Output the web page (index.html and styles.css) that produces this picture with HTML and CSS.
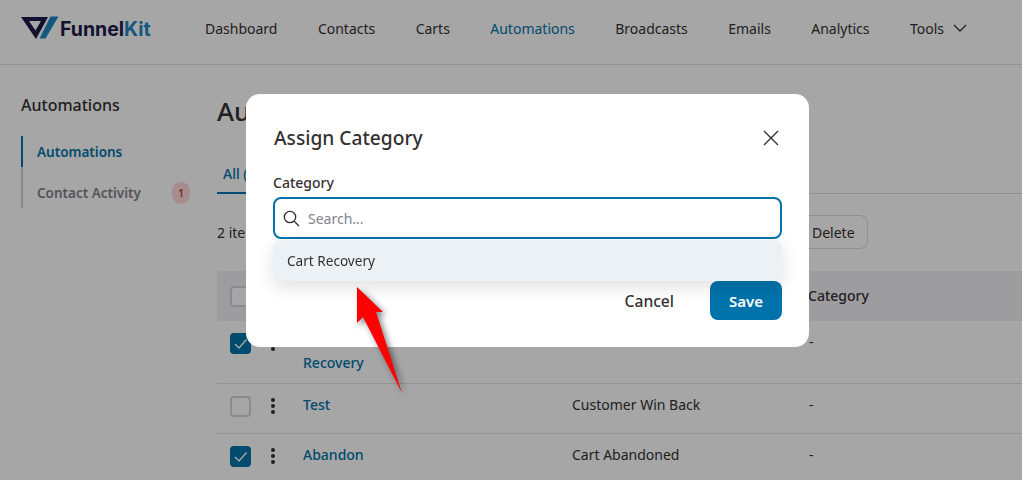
FILE: index.html
```html
<!DOCTYPE html>
<html lang="en">
<head>
<meta charset="utf-8">
<title>Automations - FunnelKit</title>
<link rel="stylesheet" href="styles.css">
</head>
<body>
<header class="topbar">
  <a class="brand">
    <svg class="brand-mark" width="38" height="24" viewBox="0 0 38 24">
      <path class="mark-dark" d="M0 1H27L15 23ZM8 5L14.500 14.500L20 5Z" fill-rule="evenodd"/>
      <path class="mark-blue" d="M29.500 0.500H37.500L24.500 22.500H18.500Z"/>
    </svg>
    <span class="brand-name">Funnel<em>Kit</em></span>
  </a>
  <nav class="nav">
    <a>Dashboard</a><a>Contacts</a><a>Carts</a><a class="is-active">Automations</a><a>Broadcasts</a><a>Emails</a><a>Analytics</a>
    <a class="nav-tools">Tools
      <svg width="14" height="8" viewBox="0 0 14 8"><path d="M1 1L7 7L13 1" fill="none" stroke="currentColor" stroke-width="1.3"/></svg>
    </a>
  </nav>
</header>

<div class="layout">
  <aside class="sidebar">
    <h2>Automations</h2>
    <ul class="side-list">
      <li class="is-active">Automations</li>
      <li>Contact Activity <span class="badge">1</span></li>
    </ul>
  </aside>
  <main class="main">
    <h1>Automations</h1>
    <div class="tabs"><span class="tab is-active">All (3)</span></div>
    <div class="toolbar">
      <span>2 items selected</span>
      <button class="btn-outline">Delete</button>
    </div>
    <div class="table">
      <div class="row head">
        <span class="check"></span><span class="kebab-slot"></span>
        <span class="c-name">Name</span><span class="c-trigger">Trigger</span><span class="c-cat">Category</span>
      </div>
      <div class="row tall">
        <span class="check on"><svg viewBox="0 0 21 21"><path d="M5 11L9 15L16.500 6.500"/></svg></span>
        <span class="kebab-slot"><i></i><i></i><i></i></span>
        <a class="c-name">Abandoned Cart<br>Recovery</a><span class="c-trigger">Cart Abandoned</span><span class="c-cat">-</span>
      </div>
      <div class="row">
        <span class="check"></span>
        <span class="kebab-slot"><i></i><i></i><i></i></span>
        <a class="c-name">Test</a><span class="c-trigger">Customer Win Back</span><span class="c-cat">-</span>
      </div>
      <div class="row">
        <span class="check on"><svg viewBox="0 0 21 21"><path d="M5 11L9 15L16.500 6.500"/></svg></span>
        <span class="kebab-slot"><i></i><i></i><i></i></span>
        <a class="c-name">Abandon</a><span class="c-trigger">Cart Abandoned</span><span class="c-cat">-</span>
      </div>
    </div>
  </main>
</div>

<div class="scrim"></div>

<section class="modal">
  <div class="modal-head">
    <h3>Assign Category</h3>
    <svg class="close" width="16" height="16" viewBox="0 0 16 16"><path d="M1 1L15 15M15 1L1 15" fill="none" stroke="currentColor" stroke-width="1.4"/></svg>
  </div>
  <label class="field-label">Category</label>
  <div class="search">
    <svg width="17" height="17" viewBox="0 0 17 17"><circle cx="7" cy="7" r="5.700" fill="none" stroke="currentColor" stroke-width="1.300"/><path d="M11.200 11.200L16 16" fill="none" stroke="currentColor" stroke-width="1.300"/></svg>
    <span>Search...</span>
  </div>
  <div class="option">Cart Recovery</div>
  <div class="actions">
    <span class="cancel">Cancel</span>
    <button class="save">Save</button>
  </div>
</section>

<svg class="arrow" width="70" height="125" viewBox="0 0 70 125">
  <path d="M10 5L36 30L29 30L55 111L16 35L10 41Z"/>
</svg>
</body>
</html>
```

FILE: styles.css
```css
* { box-sizing: border-box; }
html, body { height: 100%; }
body {
  margin: 0;
  height: 480px;
  overflow: hidden;
  background: #fff;
  color: #353030;
  font-family: "Noto Sans", "Open Sans", sans-serif;
  font-size: 14px;
}
.topbar {
  display: flex;
  align-items: center;
  height: 65px;
  padding: 0 0 8px 21px;
  border-bottom: 1px solid #e2e2e4;
}
.brand { display: flex; align-items: center; width: 184px; gap: 1px; }
.brand-mark { flex: none; margin-top: -1px; }
.mark-dark { fill: #1c1c4a; }
.mark-blue { fill: #1d87c4; }
.brand-name {
  font-family: Inter, "Noto Sans", sans-serif;
  font-weight: 700;
  font-size: 19.5px;
  color: #1c1c4a;
  margin-top: 2px;
}
.brand-name em { font-style: normal; color: #1d87c4; }
.nav { display: flex; align-items: center; gap: 40.4px; }
.nav a { color: #353030; }
.nav a.is-active { color: #0073aa; }
.nav-tools { display: flex; align-items: center; gap: 9px; }
.layout { display: flex; padding: 29px 0 0 21px; }
.sidebar { width: 196px; flex: none; }
.sidebar h2 { margin: 0 0 20px; font-size: 16px; font-weight: 500; line-height: 22px; }
.side-list { margin: 0; padding: 0; list-style: none; width: 169px; }
.side-list li {
  display: flex;
  align-items: center;
  justify-content: space-between;
  height: 31px;
  padding-left: 14px;
  border-left: 2px solid #d0d3da;
  font-size: 13.500px;
  font-weight: 600;
  color: #82838b;
}
.side-list li + li { height: 41px; padding-top: 10px; }
.side-list li.is-active { color: #0073aa; border-left-color: #0073aa; }
.badge {
  width: 18px;
  height: 22px;
  line-height: 22px;
  border-radius: 9px;
  background: #ffd7d7;
  color: #c0392b;
  font-size: 10px;
  text-align: center;
}
.main { width: 820px; flex: none; }
.main h1 { margin: -1px 0 0; font-size: 26px; font-weight: 500; line-height: 36px; }
.tabs { margin-top: 26px; height: 39px; padding-top: 6px; border-bottom: 1px solid #dcdce0; }
.tab { display: inline-block; height: 33px; padding: 3px 6px 0; }
.tab.is-active { color: #0073aa; font-weight: 500; border-bottom: 2px solid #0073aa; }
.toolbar { display: flex; align-items: center; justify-content: space-between; width: 651px; height: 34px; margin-top: 21px; }
.btn-outline {
  width: 78px;
  height: 34px;
  padding: 0 0 0 21px;
  text-align: left;
  background: #fff;
  border: 1px solid #dedee2;
  border-radius: 8px;
  color: #353030;
  font: inherit;
}
.table { margin-top: 22px; }
.row { display: flex; align-items: center; height: 50px; padding: 0 0 5px 13px; border-bottom: 1px solid #e4e4e6; }
.row.head { background: #f1f1f5; border-bottom: 0; padding-bottom: 0; font-weight: 500; }
.row.tall { height: 63px; padding-bottom: 0; }
.check {
  flex: none;
  width: 21px;
  height: 21px;
  background: #fff;
  border: 2px solid #d4d5dc;
  border-radius: 4px;
  display: block;
}
.check.on { background: #0073aa; border: 0; }
.check svg { display: block; fill: none; stroke: #fff; stroke-width: 1.500; }
.row.tall .check { margin-top: -17px; }
.kebab-slot { flex: none; width: 52px; display: flex; flex-direction: column; align-items: center; gap: 2px; padding-right: 8px; margin-left: 0; }
.kebab-slot i { width: 4px; height: 4px; border-radius: 50%; background: #353030; }
.row.tall .kebab-slot { margin-top: -18px; }
.c-name { width: 269px; flex: none; margin-top: -3px; color: #0073aa; font-weight: 500; line-height: 23px; }
.head .c-name { color: #353030; }
.c-trigger { width: 237px; flex: none; margin-top: -3px; }
.c-cat { flex: none; margin-top: -3px; }
.head .c-cat { margin-left: -1px; margin-top: -1px; }
.row.tall .c-name { margin-top: -2px; }
.row.tall .c-trigger { margin-top: -26px; }
.row.tall .c-cat { margin-top: -22px; }
.scrim { position: fixed; inset: 0; background: rgba(0, 0, 0, .35); }
.modal {
  position: absolute;
  left: 246px;
  top: 94px;
  width: 563px;
  height: 253px;
  padding: 30px 27px 0 27px;
  background: #fff;
  border-radius: 14px;
}
.modal-head { display: flex; align-items: center; justify-content: space-between; height: 28px; }
.modal-head h3 { margin: -2px 0 0 1px; font-size: 19.200px; font-weight: 500; }
.close { color: #353030; margin-right: 3px; margin-top: -1px; }
.field-label { display: block; margin-top: 21px; line-height: 20px; font-weight: 500; }
.search {
  display: flex;
  align-items: center;
  gap: 8px;
  height: 42px;
  margin-top: 4px;
  padding-left: 8px;
  border: 2px solid #0073aa;
  border-radius: 8px;
  color: #353030;
}
.search span { color: #82838b; }
.option {
  position: relative;
  z-index: 1;
  height: 41px;
  margin-top: 1px;
  padding-left: 14px;
  font-size: 13.600px;
  line-height: 41px;
  border-radius: 8px;
  background: #ebf1f5;
  box-shadow: 0 6px 18px rgba(0, 0, 0, .12);
}
.actions { display: flex; align-items: center; justify-content: flex-end; gap: 36px; height: 39px; }
.cancel { font-size: 15.600px; font-weight: 500; }
.save {
  width: 72px;
  height: 39px;
  border: 0;
  border-radius: 8px;
  background: #0073aa;
  color: #fff;
  font: inherit;
  font-size: 15px;
  font-weight: 600;
}
.arrow { position: absolute; left: 347px; top: 282px; overflow: visible; filter: drop-shadow(3px 3px 3px rgba(0, 0, 0, .5)); }
.arrow path { fill: #fe0000; }
```
